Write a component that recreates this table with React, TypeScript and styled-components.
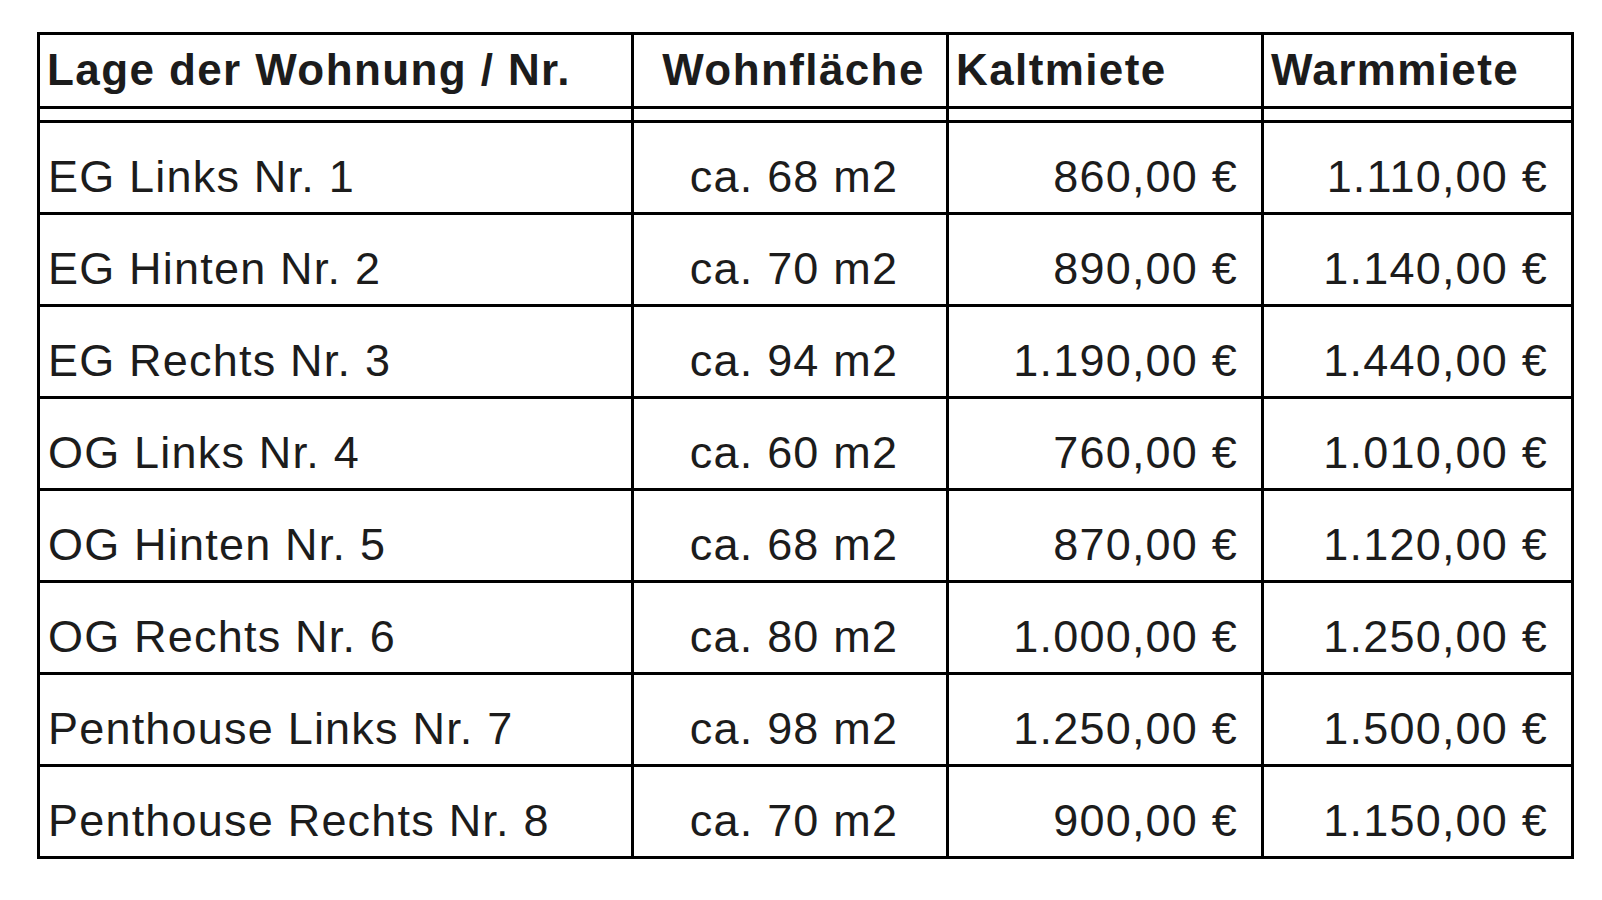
import React from "react"
import styled, { createGlobalStyle } from "styled-components"

const GlobalStyle = createGlobalStyle`
  html, body {
    margin: 0;
    padding: 0;
    background: #ffffff;
  }
  body {
    font-family: "Liberation Sans", Arial, sans-serif;
    color: #1c1c1c;
  }
`

const Page = styled.div`
  width: 1602px;
  height: 900px;
  padding: 32px 0 0 37px;
  box-sizing: border-box;
`

const Table = styled.div`
  width: 1537px;
  box-sizing: border-box;
  border-top: 3px solid #000;
  border-left: 3px solid #000;
  border-right: 3px solid #000;
`

const Row = styled.div<{ $height: number }>`
  display: grid;
  grid-template-columns: 594px 315px 315px 307px;
  height: ${(p) => p.$height}px;
  box-sizing: border-box;
  border-bottom: 3px solid #000;
`

const Cell = styled.div<{ $align?: "left" | "center" | "right"; $head?: boolean }>`
  display: flex;
  align-items: flex-end;
  justify-content: ${(p) =>
    p.$align === "right" ? "flex-end" : p.$align === "center" ? "center" : "flex-start"};
  box-sizing: border-box;
  border-right: 3px solid #000;
  padding: ${(p) =>
    p.$align === "right" ? "0 23px 13px 0" : p.$head ? "0 0 14px 7px" : "0 0 13px 8px"};
  font-size: ${(p) => (p.$head ? "44px" : "45px")};
  font-weight: ${(p) => (p.$head ? 700 : 400)};
  letter-spacing: ${(p) => (p.$head ? "1.4px" : "1.2px")};
  line-height: 1;
  white-space: nowrap;

  &:last-child {
    border-right: none;
  }
`

const Blank = styled.div`
  border-right: 3px solid #000;

  &:last-child {
    border-right: none;
  }
`

const rows = [
  ["EG Links Nr. 1", "ca. 68 m2", "860,00 €", "1.110,00 €"],
  ["EG Hinten Nr. 2", "ca. 70 m2", "890,00 €", "1.140,00 €"],
  ["EG Rechts Nr. 3", "ca. 94 m2", "1.190,00 €", "1.440,00 €"],
  ["OG Links Nr. 4", "ca. 60 m2", "760,00 €", "1.010,00 €"],
  ["OG Hinten Nr. 5", "ca. 68 m2", "870,00 €", "1.120,00 €"],
  ["OG Rechts Nr. 6", "ca. 80 m2", "1.000,00 €", "1.250,00 €"],
  ["Penthouse Links Nr. 7", "ca. 98 m2", "1.250,00 €", "1.500,00 €"],
  ["Penthouse Rechts Nr. 8", "ca. 70 m2", "900,00 €", "1.150,00 €"],
]

export default function App() {
  return (
    <Page>
      <GlobalStyle />
      <Table>
        <Row $height={74}>
          <Cell $head>Lage der Wohnung / Nr.</Cell>
          <Cell $head $align="center">Wohnfläche</Cell>
          <Cell $head>Kaltmiete</Cell>
          <Cell $head>Warmmiete</Cell>
        </Row>
        <Row $height={14}>
          <Blank />
          <Blank />
          <Blank />
          <Blank />
        </Row>
        {rows.map((r) => (
          <Row key={r[0]} $height={92}>
            <Cell>{r[0]}</Cell>
            <Cell $align="center">{r[1]}</Cell>
            <Cell $align="right">{r[2]}</Cell>
            <Cell $align="right">{r[3]}</Cell>
          </Row>
        ))}
      </Table>
    </Page>
  )
}
